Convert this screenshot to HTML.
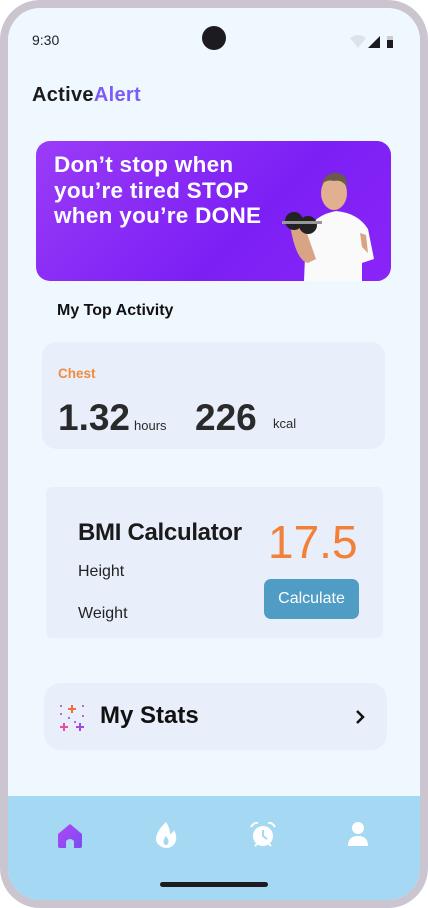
<!DOCTYPE html>
<html><head><style>
*{margin:0;padding:0;box-sizing:border-box}
body{width:428px;height:908px;background:#fff;font-family:"Liberation Sans",sans-serif;position:relative;overflow:hidden}
.frame{position:absolute;left:0;top:0;width:428px;height:908px;background:#cbc5d0;border-radius:40px}
.screen{position:absolute;left:8px;top:8px;width:412px;height:892px;background:#f0f8ff;border-radius:32px;overflow:hidden}
.abs{position:absolute}
.card{position:absolute;background:#e8effb;border-radius:14px}
</style></head><body>
<div class="frame"></div>
<div class="screen">
 <div class="abs" style="left:24px;top:24px;font-size:14px;color:#222">9:30</div>
 <div class="abs" style="left:194px;top:18px;width:24px;height:24px;border-radius:50%;background:#1c1b1f"></div>
 <svg class="abs" style="left:342px;top:26px" width="56" height="24" viewBox="0 0 56 24"><path d="M0 4 Q8 -2 16 4 L8 14Z" fill="#dde3ea"/><path d="M18 14 L30 2 L30 14Z" fill="#1c1b1f"/><rect x="37" y="2" width="6" height="12" fill="#1c1b1f"/><rect x="37" y="2" width="6" height="4" fill="#ccc"/></svg>
 <div class="abs" style="left:24px;top:76px;font-size:20px;font-weight:bold;color:#1a1a1a;letter-spacing:0.3px">Active<span style="color:#7c5cf5">Alert</span></div>
 <div class="abs" style="left:28px;top:133px;width:355px;height:140px;border-radius:14px;background:linear-gradient(135deg,#9a3cf7,#7c1ff5 60%,#8a25f8)">
  <div class="abs" style="left:18px;top:11px;font-size:22.5px;font-weight:bold;color:#fff;line-height:25.5px;letter-spacing:0.3px">Don’t stop when<br>you’re tired STOP<br>when you’re DONE</div>
  <svg class="abs" style="left:240px;top:22px" width="110" height="118" viewBox="0 0 110 118">
   <path d="M28 118 L30 70 Q38 52 60 48 Q82 50 92 66 L98 96 L86 100 L86 118Z" fill="#fafafa"/>
   <ellipse cx="58" cy="30" rx="13" ry="17" fill="#e0b090"/>
   <path d="M45 22 Q50 8 62 10 Q72 12 71 24 Q66 16 58 18 Q50 16 45 22Z" fill="#6a5a4a"/>
   <path d="M14 62 Q20 98 32 100 L40 96 L28 62Z" fill="#d9a485"/>
   <circle cx="18" cy="58" r="9" fill="#222"/><circle cx="32" cy="62" r="9" fill="#222"/>
   <rect x="6" y="58" width="40" height="3" fill="#999"/>
   <path d="M86 84 L84 70 L90 72 L92 90Z" fill="#d9a485"/>
  </svg>
 </div>
 <div class="abs" style="left:49px;top:294px;font-size:16px;font-weight:bold;color:#111">My Top Activity</div>
 <div class="card" style="left:34px;top:334px;width:343px;height:107px">
  <div class="abs" style="left:16px;top:24px;font-size:13.5px;font-weight:bold;color:#f28b3c">Chest</div>
  <div class="abs" style="left:16px;top:55px;font-size:37px;font-weight:bold;color:#2a2a2a">1.32</div>
  <div class="abs" style="left:92px;top:76px;font-size:13px;color:#2a2a2a">hours</div>
  <div class="abs" style="left:153px;top:55px;font-size:37px;font-weight:bold;color:#2a2a2a">226</div>
  <div class="abs" style="left:231px;top:74px;font-size:13px;color:#2a2a2a">kcal</div>
 </div>
 <div class="card" style="left:38px;top:479px;width:337px;height:151px;border-radius:6px">
  <div class="abs" style="left:32px;top:32px;font-size:24px;font-weight:bold;color:#1a1a1a;letter-spacing:-0.3px">BMI Calculator</div>
  <div class="abs" style="left:32px;top:76px;font-size:16px;color:#222">Height</div>
  <div class="abs" style="left:32px;top:118px;font-size:16px;color:#222">Weight</div>
  <div class="abs" style="left:222px;top:28px;font-size:46px;color:#f28038">17.5</div>
  <div class="abs" style="left:218px;top:92px;width:95px;height:40px;border-radius:7px;background:#4f9cc4;color:#fff;font-size:16px;line-height:40px;text-align:center">Calculate</div>
 </div>
 <div class="card" style="left:36px;top:675px;width:343px;height:67px;border-radius:16px">
  <svg class="abs" style="left:14px;top:20px" width="28" height="28" viewBox="0 0 28 28">
   <path d="M14 2v8M10 6h8" stroke="#f26b3a" stroke-width="2"/><path d="M6 20v8M2 24h8" stroke="#f04aa0" stroke-width="2"/><path d="M22 20v8M18 24h8" stroke="#a047f0" stroke-width="2"/>
   <g fill="#c060e0"><rect x="2" y="2" width="2" height="2"/><rect x="24" y="2" width="2" height="2"/><rect x="2" y="10" width="2" height="2"/><rect x="24" y="12" width="2" height="2"/><rect x="10" y="14" width="2" height="2"/><rect x="16" y="18" width="2" height="2"/></g>
  </svg>
  <div class="abs" style="left:56px;top:19px;font-size:24px;font-weight:bold;color:#111">My Stats</div>
  <svg class="abs" style="left:310px;top:26px" width="12" height="16" viewBox="0 0 12 16"><path d="M3 2l6 6-6 6" stroke="#111" stroke-width="2.5" fill="none"/></svg>
 </div>
 <div class="abs" style="left:0;top:788px;width:412px;height:104px;background:#a5d8f2">
  <svg class="abs" style="left:50px;top:28px" width="24" height="24" viewBox="0 0 24 24"><defs><linearGradient id="g" x1="0" y1="0" x2="1" y2="1"><stop offset="0" stop-color="#b047f5"/><stop offset="1" stop-color="#7a4cf0"/></linearGradient></defs><path d="M0 10 L12 0 L24 10 V22 Q24 24 22 24 H16 V17 Q12 13 8 17 V24 H2 Q0 24 0 22Z" fill="url(#g)"/></svg>
  <svg class="abs" style="left:146px;top:26px" width="24" height="26" viewBox="0 0 24 26"><path d="M12 0 Q6 6 4 10 Q0 18 4 22 Q8 26 12 26 Q18 26 21 21 Q24 15 20 8 Q18 12 16 12 Q16 6 12 0Z" fill="#fff"/><path d="M12 14 Q9 18 9.5 20 Q10 23 12 23 Q14 23 14.5 20 Q15 18 12 14Z" fill="#a5d8f2"/></svg>
  <svg class="abs" style="left:242px;top:26px" width="26" height="26" viewBox="0 0 26 26"><circle cx="13" cy="14" r="10" fill="#fff"/><path d="M1 5 Q4 0 8 1M25 5 Q22 0 18 1" stroke="#fff" stroke-width="2" fill="none"/><path d="M13 8v6l4 3" stroke="#a5d8f2" stroke-width="2" fill="none"/><path d="M5 24l2-2M21 24l-2-2" stroke="#fff" stroke-width="2"/></svg>
  <svg class="abs" style="left:340px;top:26px" width="20" height="24" viewBox="0 0 20 24"><circle cx="10" cy="6" r="6" fill="#fff"/><path d="M0 24 Q0 14 10 14 Q20 14 20 24Z" fill="#fff"/></svg>
  <div class="abs" style="left:152px;top:86px;width:108px;height:5px;border-radius:3px;background:#1c1b1f"></div>
 </div>
</div>
</body></html>
